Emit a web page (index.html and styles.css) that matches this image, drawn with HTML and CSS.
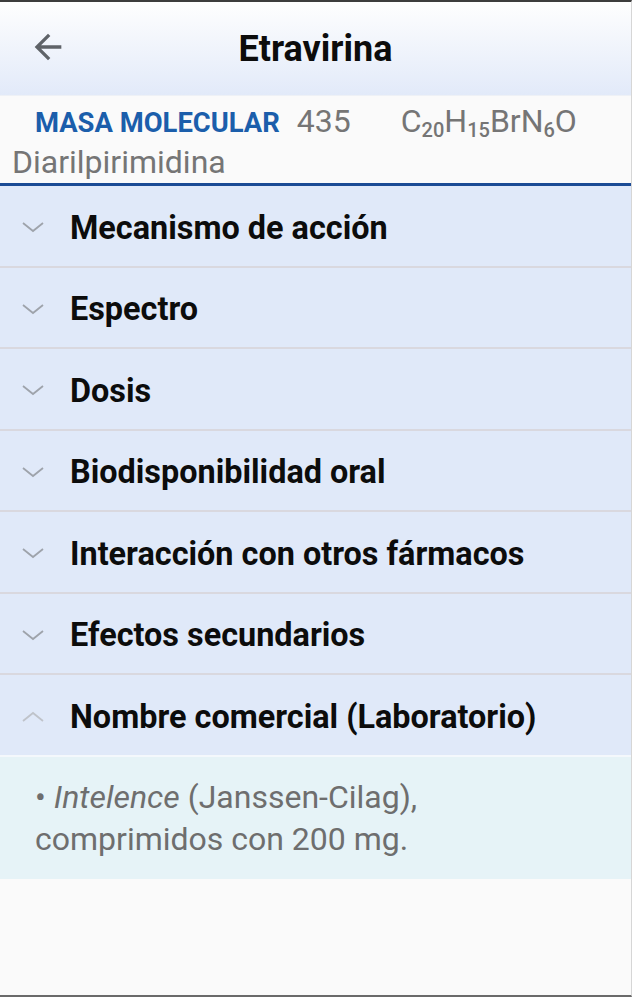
FILE: index.html
```html
<!DOCTYPE html>
<html lang="es">
<head>
<meta charset="utf-8">
<title>Etravirina</title>
<link rel="stylesheet" href="styles.css">
</head>
<body>
<div class="screen">
  <header class="topbar">
    <button class="back" aria-label="Atrás">
      <svg viewBox="0 0 24 24" width="40" height="40"><path d="M20 11H7.83l5.59-5.59L12 4l-8 8 8 8 1.41-1.41L7.83 13H20v-2z" fill="#5f6368"/></svg>
    </button>
    <h1 class="title">Etravirina</h1>
  </header>
  <section class="info">
    <div class="info-line">
      <span class="label">MASA MOLECULAR</span>
      <span class="mass">435</span>
      <span class="formula">C<sub>20</sub>H<sub>15</sub>BrN<sub>6</sub>O</span>
    </div>
    <div class="family">Diarilpirimidina</div>
  </section>
  <ul class="accordion">
    <li class="row"><span class="chev"><svg viewBox="0 0 22 11" width="22" height="11"><path d="M1 1l10 8 10-8" fill="none" stroke="#9ea3ab" stroke-width="1.8"/></svg></span><span class="row-title">Mecanismo de acción</span></li>
    <li class="row"><span class="chev"><svg viewBox="0 0 22 11" width="22" height="11"><path d="M1 1l10 8 10-8" fill="none" stroke="#9ea3ab" stroke-width="1.8"/></svg></span><span class="row-title">Espectro</span></li>
    <li class="row"><span class="chev"><svg viewBox="0 0 22 11" width="22" height="11"><path d="M1 1l10 8 10-8" fill="none" stroke="#9ea3ab" stroke-width="1.8"/></svg></span><span class="row-title">Dosis</span></li>
    <li class="row"><span class="chev"><svg viewBox="0 0 22 11" width="22" height="11"><path d="M1 1l10 8 10-8" fill="none" stroke="#9ea3ab" stroke-width="1.8"/></svg></span><span class="row-title">Biodisponibilidad oral</span></li>
    <li class="row"><span class="chev"><svg viewBox="0 0 22 11" width="22" height="11"><path d="M1 1l10 8 10-8" fill="none" stroke="#9ea3ab" stroke-width="1.8"/></svg></span><span class="row-title">Interacción con otros fármacos</span></li>
    <li class="row"><span class="chev"><svg viewBox="0 0 22 11" width="22" height="11"><path d="M1 1l10 8 10-8" fill="none" stroke="#9ea3ab" stroke-width="1.8"/></svg></span><span class="row-title">Efectos secundarios</span></li>
    <li class="row open"><span class="chev"><svg viewBox="0 0 22 11" width="22" height="11"><path d="M1 10l10-8 10 8" fill="none" stroke="#bfc3ca" stroke-width="1.8"/></svg></span><span class="row-title">Nombre comercial (Laboratorio)</span></li>
  </ul>
  <div class="panel">
    <p>• <em>Intelence</em> (Janssen-Cilag),<br>comprimidos con 200 mg.</p>
  </div>
  <div class="filler"></div>
</div>
</body>
</html>
```

FILE: styles.css
```css
* { box-sizing: border-box; }
html, body { margin: 0; padding: 0; }
body {
  width: 632px;
  height: 997px;
  background: #fafafa;
  font-family: Roboto, "Noto Sans", sans-serif;
  overflow: hidden;
}
.screen {
  height: 997px;
  display: flex;
  flex-direction: column;
  border-top: 2px solid #3d3d3d;
  border-bottom: 2px solid #6a6a6a;
  border-right: 1px solid #d6d6d6;
}
.topbar {
  height: 94px;
  flex: none;
  position: relative;
  display: flex;
  align-items: center;
  justify-content: center;
  background: linear-gradient(#fefefe, #e2eaf9);
  border-bottom: 1px solid #eef1f6;
}
.back {
  position: absolute;
  left: 28px;
  top: 25px;
  border: 0;
  padding: 0;
  background: none;
  width: 40px;
  height: 40px;
}
.back svg { display: block; }
.title {
  margin: 0;
  font-size: 36px;
  font-weight: 700;
  color: #0c0c0c;
  letter-spacing: 0;
}
.info {
  height: 90px;
  flex: none;
  background: #fafafa;
  border-bottom: 3px solid #1b4b95;
  padding: 6px 0 0 12px;
  color: #757575;
}
.info-line {
  display: flex;
  align-items: baseline;
  padding-left: 23px;
  height: 42px;
}
.label {
  color: #1b5eab;
  font-weight: 700;
  font-size: 27.4px;
  letter-spacing: 0;
}
.mass {
  font-size: 32px;
  margin-left: 17px;
}
.formula {
  font-size: 32px;
  margin-left: 50px;
}
.formula sub {
  font-size: 20px;
  vertical-align: -5px;
  line-height: 0;
  font-weight: 500;
}
.family {
  font-size: 32px;
  line-height: 36px;
}
.accordion {
  list-style: none;
  margin: 0;
  padding: 0;
  flex: none;
}
.row {
  height: 81.5px;
  display: flex;
  align-items: center;
  background: #e0e9f9;
  border-bottom: 2px solid #d9d8df;
  padding-top: 4px;
}
.row.open { border-bottom: 2px solid #f4f8fc; }
.chev {
  width: 70px;
  padding-left: 22px;
  display: flex;
  align-items: center;
}
.chev svg { display: block; }
.row-title {
  font-size: 32.4px;
  font-weight: 700;
  color: #0c0c0c;
}
.panel {
  flex: none;
  height: 122px;
  background: #e6f3f7;
  padding: 19px 0 0 35px;
}
.panel p {
  margin: 0;
  font-size: 32px;
  line-height: 42px;
  color: #6e6e6e;
}
.panel em { font-style: italic; }
.filler { flex: 1; background: #fafafa; }
```
